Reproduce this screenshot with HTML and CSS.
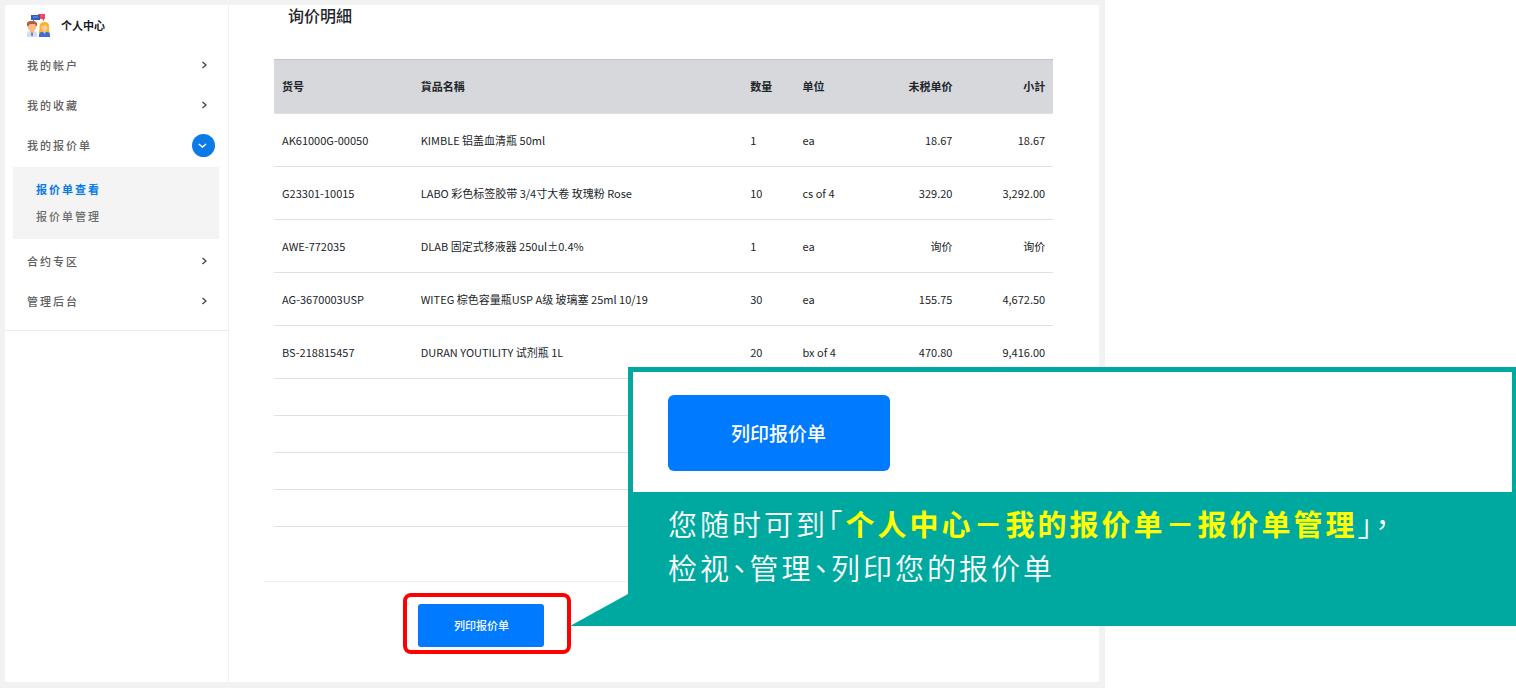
FILE: index.html
```html
<!DOCTYPE html>
<html lang="zh-CN">
<head>
<meta charset="utf-8">
<meta name="viewport" content="width=device-width, initial-scale=1">
<title>询价明細</title>
<link rel="stylesheet" href="styles.css">
</head>
<body>
<div class="page">
  <div class="frame">
    <aside class="sidebar">
      <nav class="menu" aria-label="个人中心">
        <h2 class="menu-title">
          <svg class="people" viewBox="0 0 24 24" aria-hidden="true">
            <path d="M12 1h7v5h-1v2l-2-2h-4z" fill="#f2485c"/>
            <path d="M5 2h9v5H8L7 9V7H5z" fill="#2f5fc4"/>
            <path d="M7 4h5" stroke="#7f9de0" fill="none"/>
            <path d="M1 24v-3q0-3 3-3h4q3 0 3 3v3z" fill="#d3dff0"/>
            <path d="M4 17h4v2l-2 2-2-2z" fill="#f6b88c"/>
            <path d="M6 19l1 2-1 3-1-3z" fill="#3c6fd0"/>
            <circle cx="6" cy="13.500" r="4.500" fill="#fbb88a"/>
            <path d="M1 13q-1-5 4-5h3q4 1 3 5h-1l-1-2H4l-2 2z" fill="#b0603f"/>
            <path d="M12.500 20q1-1 1-6 0-5 5-5t4.500 5q0 5 1 6z" fill="#fdb22c"/>
            <path d="M13 24v-2q0-3 3-3h5q3 0 3 3v2z" fill="#3b70d2"/>
            <path d="M17 17h3v2l-1.500 2-1.500-2z" fill="#f6b88c"/>
            <path d="M15.500 13.500q3 0 4-2 1 2 2 2 0 4.500-3 4.500t-3-4.500z" fill="#fcc89f"/>
          </svg>
          个人中心
        </h2>
        <button class="menu-item" type="button">我的帐户<svg class="arrow" viewBox="0 0 12 12" aria-hidden="true"><path d="M4.500 3l3.500 3-3.500 3"/></svg></button>
        <button class="menu-item" type="button">我的收藏<svg class="arrow" viewBox="0 0 12 12" aria-hidden="true"><path d="M4.500 3l3.500 3-3.500 3"/></svg></button>
        <button class="menu-item menu-item-open" type="button" aria-expanded="true">我的报价单<svg class="toggle" viewBox="0 0 22 22" aria-hidden="true"><circle cx="11" cy="11" r="11"/><path d="M6.500 9.500l3.500 3 3.500-3"/></svg></button>
        <div class="submenu">
          <a class="submenu-link submenu-link-active" href="#view">报价单查看</a>
          <a class="submenu-link" href="#manage">报价单管理</a>
        </div>
        <button class="menu-item" type="button">合约专区<svg class="arrow" viewBox="0 0 12 12" aria-hidden="true"><path d="M4.500 3l3.500 3-3.500 3"/></svg></button>
        <button class="menu-item" type="button">管理后台<svg class="arrow" viewBox="0 0 12 12" aria-hidden="true"><path d="M4.500 3l3.500 3-3.500 3"/></svg></button>
      </nav>
    </aside>
    <main class="content">
      <h1 class="title">询价明細</h1>
      <table class="quote">
        <colgroup>
          <col class="col-code"><col class="col-name"><col class="col-qty"><col class="col-unit"><col class="col-price"><col class="col-total">
        </colgroup>
        <thead>
          <tr><th>货号</th><th>貨品名稱</th><th>数量</th><th>单位</th><th class="num">未税单价</th><th class="num">小計</th></tr>
        </thead>
        <tbody>
          <tr><td>AK61000G-00050</td><td>KIMBLE 铝盖血清瓶 50ml</td><td>1</td><td>ea</td><td class="num">18.67</td><td class="num">18.67</td></tr>
          <tr><td>G23301-10015</td><td>LABO 彩色标签胶带 3/4寸大卷 玫瑰粉 Rose</td><td>10</td><td>cs of 4</td><td class="num">329.20</td><td class="num">3,292.00</td></tr>
          <tr><td>AWE-772035</td><td>DLAB 固定式移液器 250ul±0.4%</td><td>1</td><td>ea</td><td class="num">询价</td><td class="num">询价</td></tr>
          <tr><td>AG-3670003USP</td><td>WITEG 棕色容量瓶USP A级 玻璃塞 25ml 10/19</td><td>30</td><td>ea</td><td class="num">155.75</td><td class="num">4,672.50</td></tr>
          <tr><td>BS-218815457</td><td>DURAN YOUTILITY 试剂瓶 1L</td><td>20</td><td>bx of 4</td><td class="num">470.80</td><td class="num">9,416.00</td></tr>
        </tbody>
        <tfoot>
          <tr><td colspan="6"></td></tr>
          <tr><td colspan="6"></td></tr>
          <tr><td colspan="6"></td></tr>
          <tr><td colspan="6"></td></tr>
        </tfoot>
      </table>
      <div class="actions">
        <div class="highlight">
          <button class="print" type="button">列印报价单</button>
        </div>
      </div>
    </main>
  </div>
  <section class="callout">
    <div class="callout-preview">
      <button class="print print-large" type="button">列印报价单</button>
    </div>
    <p class="callout-text">您随时可到<span class="mark" lang="zh-TW">「</span><strong>个人中心－我的报价单－报价单管理</strong><span class="mark" lang="zh-TW">」，</span><br>检视<span class="mark" lang="zh-TW">、</span>管理<span class="mark" lang="zh-TW">、</span>列印您的报价单</p>
    <svg class="tail" viewBox="0 0 58 32" aria-hidden="true"><path d="M58 0v32H0z"/></svg>
  </section>
</div>
</body>
</html>
```
FILE: styles.css
```css
* {
  box-sizing: border-box;
}

body {
  margin: 0;
  background: #fff;
  color: #212529;
  font-family: "Noto Sans CJK SC", sans-serif;
  font-size: 11px;
  line-height: 16px;
}

button {
  border: 0;
  font: inherit;
  cursor: pointer;
}

.page {
  position: relative;
}

.frame {
  display: grid;
  grid-template-columns: 224px 1fr;
  width: 72.9%;
  border: solid #f2f2f2;
  border-width: 5px 6px 6px 5px;
}

.sidebar {
  border-right: 1px solid #f0f0f0;
}

.menu {
  padding-bottom: 9px;
  border-bottom: 1px solid #ebebeb;
}

.menu-title {
  display: flex;
  align-items: center;
  gap: 11px;
  height: 40px;
  margin: 0;
  padding-left: 21px;
  color: #16181b;
  font-size: 11px;
  font-weight: 700;
}

.people {
  width: 24px;
  height: 24px;
}

.menu-item {
  display: flex;
  align-items: center;
  justify-content: space-between;
  width: 100%;
  height: 40px;
  padding: 0 18px 0 22px;
  background: none;
  color: #606060;
  font-weight: 500;
  letter-spacing: 2px;
}

.menu-item-open {
  padding-right: 13px;
}

.arrow {
  width: 12px;
  height: 12px;
  fill: none;
  stroke: #444;
  stroke-width: 1.3;
}

.toggle {
  width: 23px;
  height: 23px;
  fill: #0a7be6;
}

.toggle path {
  fill: none;
  stroke: #fff;
  stroke-width: 1.3;
}

.submenu {
  margin: 2px 9px 2px 8px;
  padding: 9px 23px;
  background: #f4f4f4;
}

.submenu-link {
  display: block;
  color: #6b6b6b;
  font-weight: 500;
  letter-spacing: 2px;
  line-height: 27px;
  text-decoration: none;
}

.submenu-link-active {
  color: #0a7be6;
  font-weight: 700;
}

.content {
  padding-bottom: 28px;
}

.title {
  margin: 0 59px 34px;
  font-size: 16px;
  font-weight: 500;
  line-height: 20px;
}

.quote {
  width: calc(100% - 91px);
  margin: 0 46px 0 45px;
  border-collapse: collapse;
  table-layout: fixed;
}

.col-code { width: 17.8%; }
.col-name { width: 42.3%; }
.col-qty { width: 6.7%; }
.col-unit { width: 11%; }
.col-price { width: 10.3%; }
.col-total { width: 11.9%; }

.quote th,
.quote td {
  height: 53px;
  padding: 0 8px 1px;
  border-bottom: 1px solid #dee2e6;
  text-align: left;
  white-space: nowrap;
}

.quote th {
  height: 54px;
  padding-bottom: 2px;
  border-top: 1px solid #c3c5c9;
  background: #d6d8db;
  font-weight: 700;
}

.quote tfoot td {
  height: 37px;
}

.quote .num {
  text-align: right;
}

.actions {
  margin: 54px 36px 0 35px;
  padding: 11px 139px 0;
  border-top: 1px solid #f0f0f0;
}

.highlight {
  display: inline-flex;
  padding: 7px 23px 3px 11px;
  border: 4px solid #f00;
  border-radius: 8px;
}

.print {
  padding: 13px 35px 13px 36px;
  border-radius: 3px;
  background: #007bff;
  color: #fff;
  font-weight: 500;
  line-height: 17px;
}

.print-large {
  padding: 24px 64px 24px 63px;
  border-radius: 6px;
  font-size: 19px;
  line-height: 28px;
}

.callout {
  position: absolute;
  top: 367px;
  right: 0;
  left: 628px;
  padding: 5px 4px 37px 5px;
  background: #00a99f;
}

.callout-preview {
  display: flex;
  padding: 23px 35px 21px;
  background: #fff;
}

.callout-text {
  margin: 9px 35px 0;
  color: #fff;
  font-size: 29px;
  font-weight: 350;
  letter-spacing: 3px;
  line-height: 44px;
}

.callout-text strong {
  color: #ff0;
  font-weight: 700;
}

.mark {
  font-family: "Noto Sans CJK TC", sans-serif;
  font-feature-settings: "halt";
}

.tail {
  position: absolute;
  right: 100%;
  bottom: 0;
  width: 58px;
  height: 32px;
  fill: #00a99f;
}
```
